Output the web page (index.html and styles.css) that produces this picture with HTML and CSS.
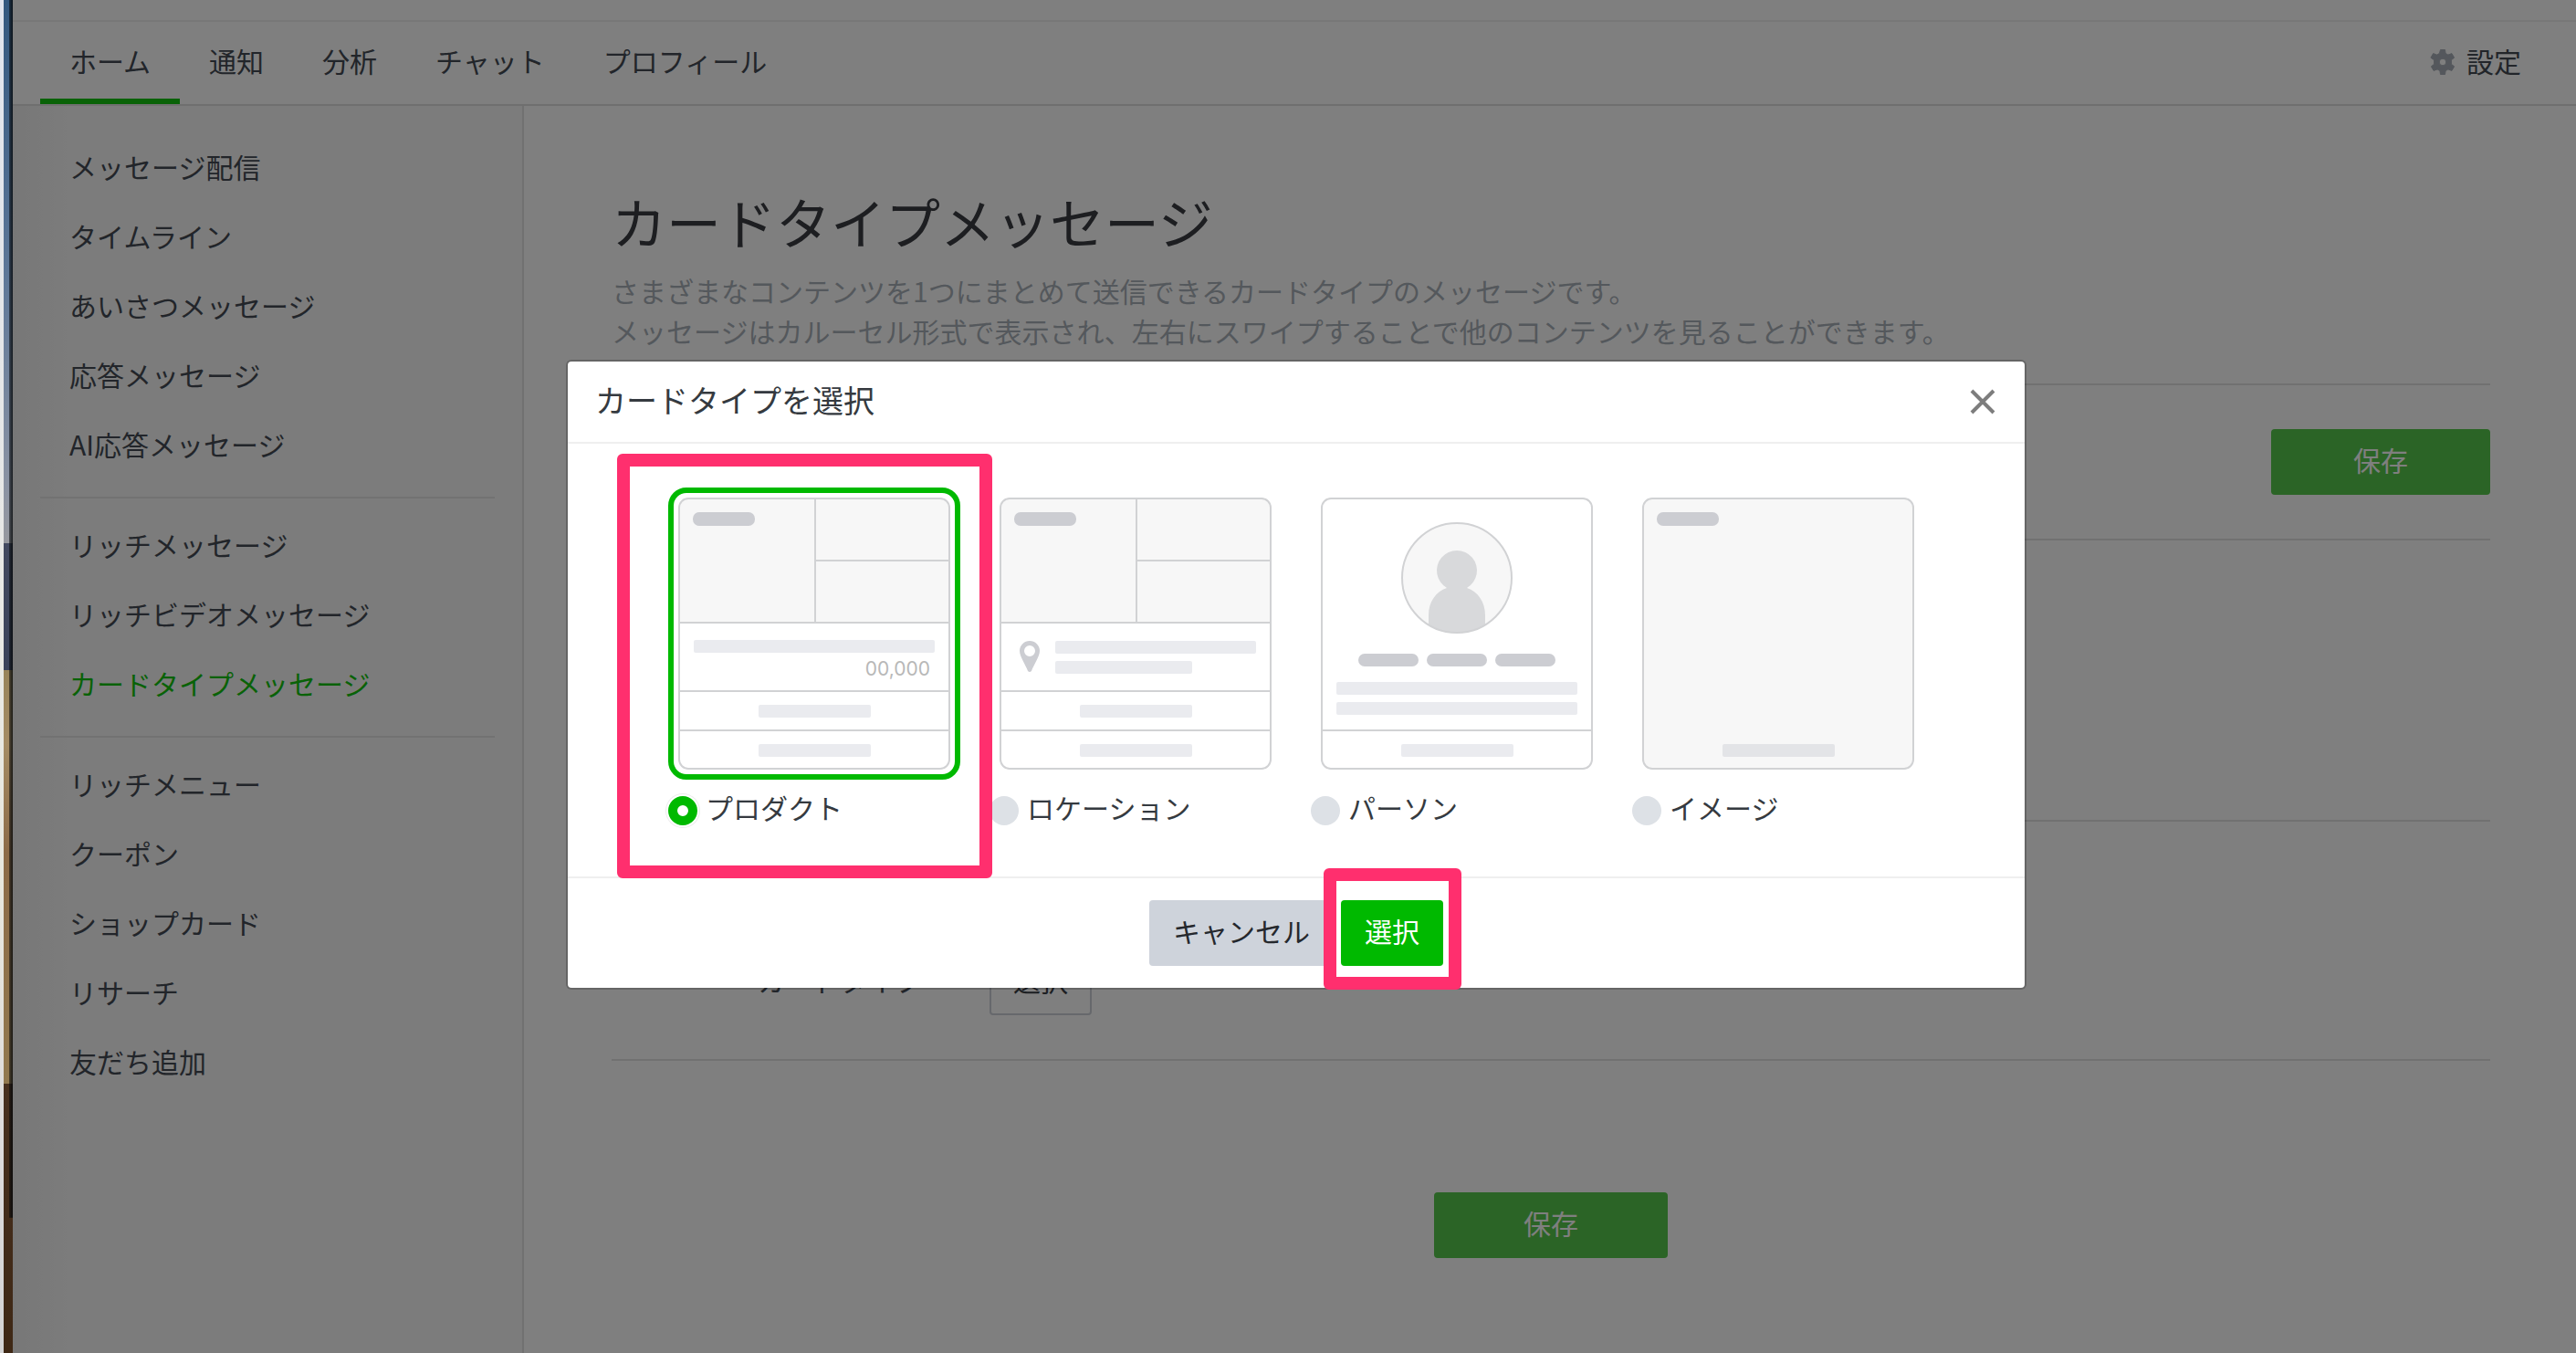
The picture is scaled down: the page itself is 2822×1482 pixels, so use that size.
FILE: index.html
```html
<!DOCTYPE html>
<html lang="ja">
<head>
<meta charset="utf-8">
<meta name="viewport" content="width=device-width, initial-scale=1">
<title>カードタイプメッセージ</title>
<link rel="stylesheet" href="styles.css">
</head>
<body>
<div class="desktop">
  <div class="wallpaper" aria-hidden="true"></div>
  <div class="window">
    <header class="topbar">
      <nav class="tabs">
        <a class="tab is-active" href="#">ホーム</a>
        <a class="tab" href="#">通知</a>
        <a class="tab" href="#">分析</a>
        <a class="tab" href="#">チャット</a>
        <a class="tab" href="#">プロフィール</a>
      </nav>
      <a class="settings" href="#">
        <svg class="gear" viewBox="0 0 28 28" aria-hidden="true"><path fill-rule="evenodd" stroke-linejoin="round" d="M11.500 .5h5l.6 4 2.800 1.600 4-1.500 2.700 4.600-3.200 2.500v4.600l3.200 2.500-2.700 4.600-4-1.500-2.800 1.600-.6 4h-5l-.6-4-2.800-1.600-4 1.500-2.700-4.600 3.200-2.500v-4.600L.9 9.200l2.700-4.600 4 1.500 2.800-1.600zM14 10.200a3.800 3.800 0 1 0 0 7.600 3.800 3.800 0 0 0 0-7.600z"/></svg>
        <span>設定</span>
      </a>
    </header>
    <div class="columns">
      <nav class="sidebar">
        <ul class="menu">
          <li><a href="#">メッセージ配信</a></li>
          <li><a href="#">タイムライン</a></li>
          <li><a href="#">あいさつメッセージ</a></li>
          <li><a href="#">応答メッセージ</a></li>
          <li><a href="#">AI応答メッセージ</a></li>
        </ul>
        <ul class="menu">
          <li><a href="#">リッチメッセージ</a></li>
          <li><a href="#">リッチビデオメッセージ</a></li>
          <li><a class="is-current" href="#">カードタイプメッセージ</a></li>
        </ul>
        <ul class="menu">
          <li><a href="#">リッチメニュー</a></li>
          <li><a href="#">クーポン</a></li>
          <li><a href="#">ショップカード</a></li>
          <li><a href="#">リサーチ</a></li>
          <li><a href="#">友だち追加</a></li>
        </ul>
      </nav>
      <main class="content">
        <h1>カードタイプメッセージ</h1>
        <p class="lead">さまざまなコンテンツを1つにまとめて送信できるカードタイプのメッセージです。<br>メッセージはカルーセル形式で表示され、左右にスワイプすることで他のコンテンツを見ることができます。</p>
        <div class="actions"><button class="btn btn-save" type="button">保存</button></div>
        <div class="panel"></div>
        <div class="panel panel-type">
          <span class="field-name" id="type-name">カードタイプ</span>
          <button class="btn btn-outline" type="button" aria-describedby="type-name">選択</button>
        </div>
        <div class="bottom"><button class="btn btn-save btn-wide" type="button">保存</button></div>
      </main>
    </div>

    <div class="backdrop">
      <form class="modal" role="dialog" aria-labelledby="modal-title">
        <div class="modal-head">
          <h2 id="modal-title">カードタイプを選択</h2>
          <button class="close" type="button" aria-label="閉じる"><svg viewBox="0 0 28 28" aria-hidden="true"><path d="M2 2l24 24M26 2L2 26"/></svg></button>
        </div>
        <div class="options">
          <label class="option is-marked">
            <svg class="thumb" viewBox="0 0 298 298" aria-hidden="true">
              <path class="shade" d="M1 137V15Q1 1 15 1H283Q297 1 297 15V137z"/>
              <path class="line" d="M150 1V137M150 69H297M1 137H297M1 212H297M1 255H297"/>
              <rect class="pill" x="16" y="16" width="68" height="15" rx="7"/>
              <rect class="bar" x="17" y="156" width="264" height="14" rx="2"/>
              <text class="price" x="276" y="195">00,000</text>
              <rect class="bar" x="88" y="227" width="123" height="14" rx="2"/>
              <rect class="bar" x="88" y="270" width="123" height="14" rx="2"/>
              <rect class="frame" x="1" y="1" width="296" height="296" rx="10"/>
            </svg>
            <span class="choice"><input type="radio" name="type" checked>プロダクト</span>
          </label>
          <label class="option">
            <svg class="thumb" viewBox="0 0 298 298" aria-hidden="true">
              <path class="shade" d="M1 137V15Q1 1 15 1H283Q297 1 297 15V137z"/>
              <path class="line" d="M150 1V137M150 69H297M1 137H297M1 212H297M1 255H297"/>
              <rect class="pill" x="16" y="16" width="68" height="15" rx="7"/>
              <path class="pill" fill-rule="evenodd" d="M33 157a11 11 0 0 0-11 11c0 6 7 16 9 22q2 2 4 0c2-6 9-16 9-22a11 11 0 0 0-11-11zm0 5a6 6 0 1 1 0 12 6 6 0 0 1 0-12z"/>
              <rect class="bar" x="61" y="157" width="220" height="14" rx="2"/>
              <rect class="bar" x="61" y="179" width="150" height="14" rx="2"/>
              <rect class="bar" x="88" y="227" width="123" height="14" rx="2"/>
              <rect class="bar" x="88" y="270" width="123" height="14" rx="2"/>
              <rect class="frame" x="1" y="1" width="296" height="296" rx="10"/>
            </svg>
            <span class="choice"><input type="radio" name="type">ロケーション</span>
          </label>
          <label class="option">
            <svg class="thumb" viewBox="0 0 298 298" aria-hidden="true">
              <circle class="shade" cx="149" cy="88" r="60"/>
              <path class="person" d="M118 140V129C118 114 126 103 138 99A22 22 0 1 1 160 99C172 103 180 114 180 129V140Q149 157 118 140z"/>
              <circle class="frame" cx="149" cy="88" r="60"/>
              <rect class="pill" x="41" y="171" width="66" height="14" rx="7"/>
              <rect class="pill" x="116" y="171" width="66" height="14" rx="7"/>
              <rect class="pill" x="191" y="171" width="66" height="14" rx="7"/>
              <rect class="bar" x="17" y="202" width="264" height="14" rx="2"/>
              <rect class="bar" x="17" y="224" width="264" height="14" rx="2"/>
              <path class="line" d="M1 255H297"/>
              <rect class="bar" x="88" y="270" width="123" height="14" rx="2"/>
              <rect class="frame" x="1" y="1" width="296" height="296" rx="10"/>
            </svg>
            <span class="choice"><input type="radio" name="type">パーソン</span>
          </label>
          <label class="option">
            <svg class="thumb" viewBox="0 0 298 298" aria-hidden="true">
              <rect class="shade" x="1" y="1" width="296" height="296" rx="10"/>
              <rect class="pill" x="16" y="16" width="68" height="15" rx="7"/>
              <rect class="bar-dark" x="88" y="270" width="123" height="14" rx="2"/>
              <rect class="frame" x="1" y="1" width="296" height="296" rx="10"/>
            </svg>
            <span class="choice"><input type="radio" name="type">イメージ</span>
          </label>
        </div>
        <div class="modal-foot">
          <button class="btn btn-cancel" type="button">キャンセル</button>
          <button class="btn btn-select" type="button">選択</button>
        </div>
      </form>
    </div>
  </div>
</div>
</body>
</html>
```
FILE: styles.css
```css
* { box-sizing: border-box; }

body {
  margin: 0;
  background: #fff;
  color: #444b54;
  font-family: "Noto Sans CJK JP", "Noto Sans", sans-serif;
  font-size: 30px;
  line-height: 44px;
}

a { color: inherit; text-decoration: none; }
ul { list-style: none; margin: 0; padding: 0; }
h1, h2, p { margin: 0; font-weight: 400; }
button { font: inherit; cursor: pointer; }

/* Desktop visible at the left of the window */
.desktop { display: flex; min-height: 100vh; }
.wallpaper {
  flex: none;
  width: 14px;
  background:
    linear-gradient(#e0e4ee, #e9e9e4 50%, #e8e8de 65%, #dddadb 85%, #d4d4d4) 0 0 / 4px 100% no-repeat,
    linear-gradient(90deg, rgba(5, 8, 10, .5), rgba(5, 8, 10, .85)) 10px 0 / 4px 90% no-repeat,
    linear-gradient(#33587f, #5d7798 296px, #8b93a3 534px, #97999f 595px, #434a60 595px, #3b435a 734px, #98845a 734px, #a58c64 815px, #8c6b47 934px, #92794f 1187px, #48301f 1187px, #3e2815);
}
.window {
  position: relative;
  flex: 1;
  display: flex;
  flex-direction: column;
  padding-top: 22px;
}

/* Top navigation */
.topbar {
  display: flex;
  justify-content: space-between;
  border-top: 2px solid #efefef;
  border-bottom: 2px solid #dfdfdf;
  padding: 0 60px 0 30px;
}
.tabs { display: flex; }
.tab { padding: 20px 32px; border-bottom: 6px solid transparent; }
.tab.is-active { border-bottom-color: #12c40e; }
.settings { display: flex; align-items: flex-start; gap: 12px; padding-top: 20px; }
.gear { width: 28px; height: 28px; margin-top: 10px; fill: #a9afb8; stroke: #a9afb8; }

/* Side menu */
.columns { flex: 1; display: flex; }
.sidebar {
  flex: none;
  width: 560px;
  padding: 28px 30px 0;
  background: linear-gradient(90deg, #efefef, #f8f8f8 60px);
  border-right: 2px solid #e2e2e2;
}
.menu + .menu { margin-top: 20px; padding-top: 12px; border-top: 2px solid #e4e4e4; }
.menu a { display: block; padding: 16px 32px; }
.menu .is-current { color: #12c40e; }

/* Page body */
.content { flex: 1; padding: 90px 94px 96px 96px; }
h1 { color: #3a3c42; font-size: 60px; line-height: 72px; }
.lead { margin-top: 18px; color: #a9b0b8; }
.actions {
  display: flex;
  justify-content: flex-end;
  margin-top: 36px;
  padding: 48px 0;
  border-top: 2px solid #e2e2e2;
}
.panel { min-height: 308px; border-top: 2px solid #e2e2e2; }
.panel-type {
  display: flex;
  align-items: center;
  gap: 74px;
  min-height: 0;
  padding: 140px 160px 48px;
  border-bottom: 2px solid #e2e2e2;
}
.field-name { padding-bottom: 6px; }
.bottom { display: flex; justify-content: center; padding-top: 144px; }

.btn {
  height: 72px;
  padding: 0 26px 6px;
  border: 0;
  border-radius: 4px;
  color: #fff;
}
.btn-save { min-width: 240px; background: #56c84c; }
.btn-wide { min-width: 256px; }
.btn-outline { padding: 0 24px 6px; border: 2px solid #cdd1d8; background: #fff; color: #3a4047; }
.btn-cancel { background: #ced3db; color: #25282d; }
.btn-select { background: #00b900; }

/* Modal */
.backdrop {
  position: absolute;
  inset: 0;
  display: flex;
  justify-content: center;
  align-items: flex-start;
  padding: 394px 0 0 4px;
  background: rgba(0, 0, 0, .5);
}
.modal {
  width: 1600px;
  border: 2px solid rgba(0, 0, 0, .2);
  border-radius: 6px;
  background: #fff;
  background-clip: padding-box;
}
.modal-head {
  display: flex;
  justify-content: space-between;
  align-items: flex-start;
  padding: 20px 32px 24px 30px;
  border-bottom: 2px solid #efefef;
}
h2 { color: #353a40; font-size: 34px; line-height: 44px; }
.close { display: flex; padding: 10px 0 0; border: 0; background: none; }
.close svg { width: 28px; height: 28px; fill: none; stroke: #7d7d7d; stroke-width: 4; }

.options {
  display: grid;
  grid-template-columns: repeat(4, 320px);
  gap: 32px;
  padding: 48px 110px 54px;
}
.option { position: relative; display: grid; gap: 8px; color: #353a40; }
.thumb {
  width: 320px;
  height: 320px;
  padding: 5px;
  border: 6px solid transparent;
  border-radius: 20px;
}
.option:has(:checked) .thumb { border-color: #00b900; }
.shade { fill: #f7f7f7; }
.line, .frame { fill: none; stroke: #d1d2d4; stroke-width: 2; }
.pill { fill: #cccdd2; }
.bar { fill: #eaebef; }
.bar-dark { fill: #e3e4e7; }
.person { fill: #d8d9db; }
.price { fill: #b8b8b8; font-family: Inter, sans-serif; font-size: 21px; text-anchor: end; }

.choice { display: flex; align-items: flex-start; gap: 9px; }
.choice input {
  appearance: none;
  width: 32px;
  height: 32px;
  margin: 10px 0 0;
  border-radius: 50%;
  background: #dde1e6;
}
.choice input:checked {
  border: 10px solid #00b900;
  background: #fff;
  box-shadow: 0 0 0 2px #fff, 0 0 0 3px #ececec;
}

.modal-foot {
  display: flex;
  justify-content: center;
  gap: 8px;
  padding: 24px;
  border-top: 2px solid #efefef;
}
.btn-select { position: relative; }

/* Markers that point out what to click */
.is-marked::after,
.btn-select::after {
  content: "";
  position: absolute;
  z-index: 1;
  border: 14px solid #ff2f6e;
  border-radius: 6px;
  pointer-events: none;
}
.is-marked::after { inset: -37px -35px -56px -56px; }
.btn-select::after { inset: -35px -20px -26px -19px; }
```
